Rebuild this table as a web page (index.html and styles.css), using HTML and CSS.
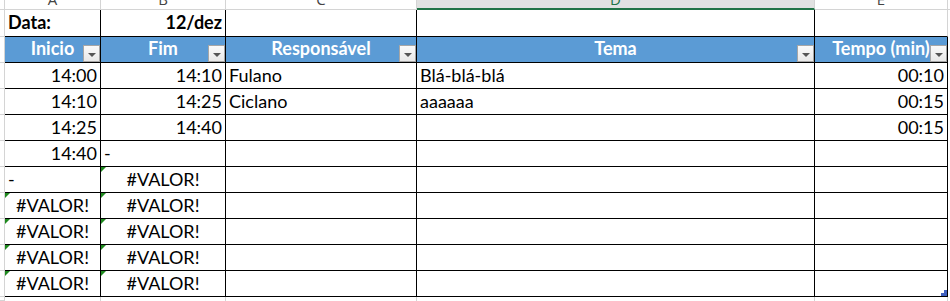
FILE: index.html
```html
<!DOCTYPE html>
<html lang="pt">
<head>
<meta charset="utf-8">
<title>Planilha</title>
<link rel="stylesheet" href="styles.css">
</head>
<body>
<div class="sheet">
  <!-- column letters -->
  <div class="stub hd"></div>
  <div class="colhd"><span>A</span></div>
  <div class="colhd"><span>B</span></div>
  <div class="colhd"><span>C</span></div>
  <div class="colhd sel"><span>D</span></div>
  <div class="colhd"><span>E</span></div>
  <div class="fill hdfill"></div>

  <!-- row 1 -->
  <div class="stub"></div>
  <div class="c b">Data:</div>
  <div class="c b r">12/dez</div>
  <div class="c"></div>
  <div class="c"></div>
  <div class="c lastg"></div>
  <div class="fill"></div>

  <!-- table header -->
  <div class="stub"></div>
  <div class="c th">Inicio<span class="dd"></span></div>
  <div class="c th">Fim<span class="dd"></span></div>
  <div class="c th">Responsável<span class="dd"></span></div>
  <div class="c th">Tema<span class="dd"></span></div>
  <div class="c th">Tempo (min)<span class="dd"></span></div>
  <div class="fill"></div>

  <div class="stub"></div>
  <div class="c r">14:00</div>
  <div class="c r">14:10</div>
  <div class="c">Fulano</div>
  <div class="c">Blá-blá-blá</div>
  <div class="c r">00:10</div>
  <div class="fill"></div>

  <div class="stub"></div>
  <div class="c r">14:10</div>
  <div class="c r">14:25</div>
  <div class="c">Ciclano</div>
  <div class="c">aaaaaa</div>
  <div class="c r">00:15</div>
  <div class="fill"></div>

  <div class="stub"></div>
  <div class="c r">14:25</div>
  <div class="c r">14:40</div>
  <div class="c"></div>
  <div class="c"></div>
  <div class="c r">00:15</div>
  <div class="fill"></div>

  <div class="stub"></div>
  <div class="c r">14:40</div>
  <div class="c">-</div>
  <div class="c"></div>
  <div class="c"></div>
  <div class="c"></div>
  <div class="fill"></div>

  <div class="stub"></div>
  <div class="c">-</div>
  <div class="c m err">#VALOR!</div>
  <div class="c"></div>
  <div class="c"></div>
  <div class="c"></div>
  <div class="fill"></div>

  <div class="stub"></div>
  <div class="c m err">#VALOR!</div>
  <div class="c m err">#VALOR!</div>
  <div class="c"></div>
  <div class="c"></div>
  <div class="c"></div>
  <div class="fill"></div>

  <div class="stub"></div>
  <div class="c m err">#VALOR!</div>
  <div class="c m err">#VALOR!</div>
  <div class="c"></div>
  <div class="c"></div>
  <div class="c sidebar"></div>
  <div class="fill"></div>

  <div class="stub"></div>
  <div class="c m err">#VALOR!</div>
  <div class="c m err">#VALOR!</div>
  <div class="c"></div>
  <div class="c"></div>
  <div class="c"></div>
  <div class="fill"></div>

  <div class="stub"></div>
  <div class="c m err">#VALOR!</div>
  <div class="c m err">#VALOR!</div>
  <div class="c"></div>
  <div class="c"></div>
  <div class="c grip"></div>
  <div class="fill"></div>

  <!-- partial next row -->
  <div class="stub"></div>
  <div class="g"></div>
  <div class="g"></div>
  <div class="g"></div>
  <div class="g"></div>
  <div class="g"></div>
  <div class="fill"></div>
</div>
</body>
</html>
```

FILE: styles.css
```css
* { box-sizing: border-box; }
html, body { margin: 0; padding: 0; background: #fff; }
body { width: 950px; height: 301px; overflow: hidden; }

.sheet {
  display: grid;
  grid-template-columns: 5px 96px 125px 191px 398px 133px 2px;
  grid-template-rows: 10px 27px 26px repeat(9, 26px) 4px;
  font-family: Lato, "Liberation Sans", sans-serif;
  font-size: 18px;
  color: #000;
}

.stub {
  border-right: 1px solid #d4d4d4;
  border-bottom: 1px solid #d4d4d4;
}
.stub.hd { background: #fff; }

.colhd {
  border-right: 1px solid #d4d4d4;
  border-bottom: 1px solid #d4d4d4;
  overflow: hidden;
  display: flex;
  justify-content: center;
  font-family: "Open Sans", "DejaVu Sans", sans-serif;
  font-size: 15px;
  color: #444;
  line-height: 15px;
}
.colhd span { margin-top: -8px; }
.colhd.sel {
  background: #e1e1e1;
  border-bottom: 2px solid #217346;
  color: #217346;
}
.hdfill { border-bottom: 1px solid #d4d4d4; }

.c {
  position: relative;
  display: flex;
  align-items: flex-end;
  padding: 0 3px 3px 3px;
  border-right: 1px solid #000;
  border-bottom: 1px solid #000;
  line-height: 20px;
  white-space: nowrap;
  overflow: hidden;
}
.c.lastg { border-right-color: #d4d4d4; }
.b { font-weight: 700; padding-bottom: 4px; }
.r { justify-content: flex-end; }
.m { justify-content: center; }

.th {
  background: #5b9bd5;
  color: #fff;
  font-weight: 700;
  justify-content: center;
  padding-bottom: 4px;
  overflow: visible;
}

.dd {
  position: absolute;
  right: 0;
  bottom: 0;
  width: 17px;
  height: 17px;
  background: linear-gradient(#fafafa, #e8e8e8);
  border: 1px solid #a6a6a6;
}
.dd::after {
  content: "";
  position: absolute;
  left: 4px;
  top: 7px;
  border-left: 4px solid transparent;
  border-right: 4px solid transparent;
  border-top: 4px solid #555;
}

.err::before {
  content: "";
  position: absolute;
  left: 0;
  top: 0;
  border-top: 5px solid #1f8a1f;
  border-right: 5px solid transparent;
}

.sidebar::after {
  content: "";
  position: absolute;
  right: -1px;
  top: 0;
  bottom: 0;
  width: 1px;
  background: #8fb0e0;
}

.grip::after {
  content: "";
  position: absolute;
  right: 0;
  bottom: 0;
  width: 6px;
  height: 3px;
  background: #3f5fbf;
}
.grip::before {
  content: "";
  position: absolute;
  right: 0;
  bottom: 3px;
  width: 3px;
  height: 3px;
  background: #3f5fbf;
}

.g { border-right: 1px solid #d4d4d4; }
.fill { background: #fff; }
```
